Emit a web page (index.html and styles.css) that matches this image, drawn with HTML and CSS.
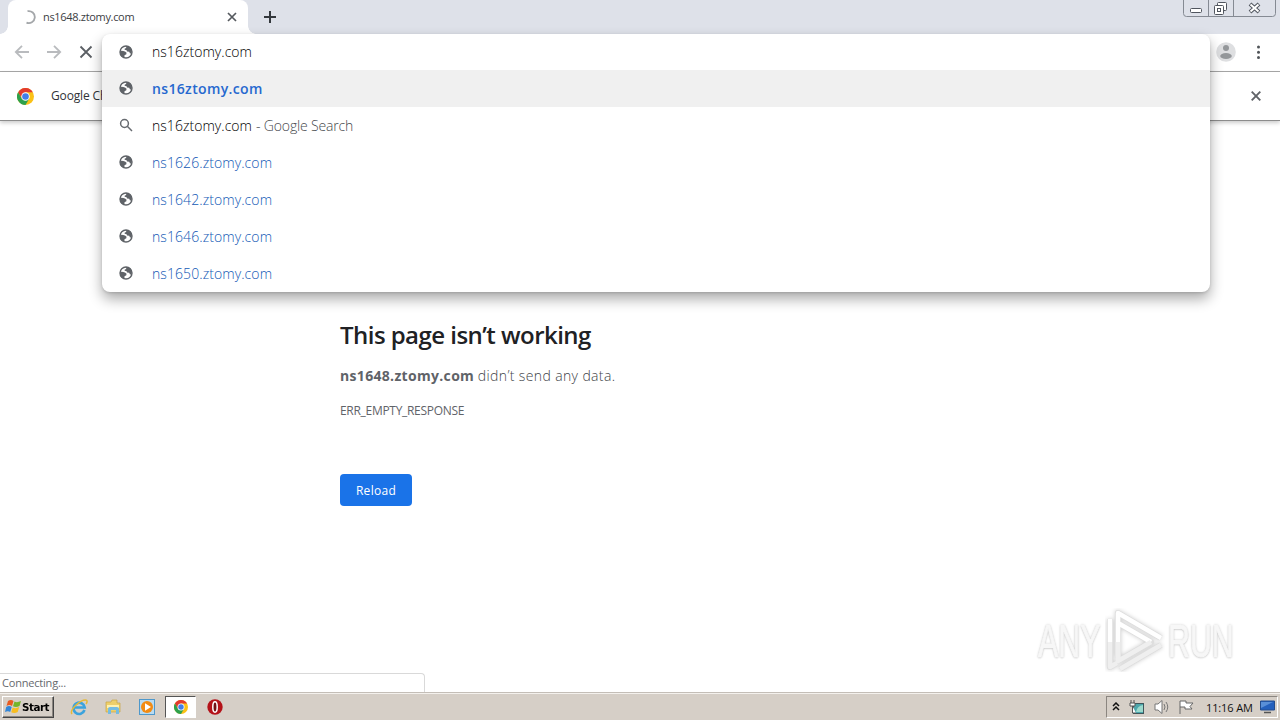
FILE: index.html
```html
<!DOCTYPE html>
<html lang="en">
<head>
<meta charset="utf-8">
<title>ns1648.ztomy.com</title>
<link rel="stylesheet" href="styles.css">
</head>
<body>
<svg class="defs" width="0" height="0" aria-hidden="true">
  <symbol id="globe" viewBox="0 0 14 14">
    <circle cx="7" cy="7" r="6" fill="#fff" stroke="#5f6368" stroke-width="1.4"/>
    <path d="M1 5.6 4.2 6 6 6.4 7.6 7.8 7.2 9.4 5.6 10 5.4 12.8 3 12 1 9.500ZM6.600 1 11 2 13 5.500 12.600 8.500 11 8.400 10.200 6.800 8 6.600 7.600 5.200 5.600 4.800 5.800 3.400 7.400 3Z" fill="#5f6368"/>
  </symbol>
  <symbol id="chrome" viewBox="0 0 18 18">
    <circle cx="9" cy="9" r="9" fill="#fbc116"/>
    <path d="M1.200 4.500A9 9 0 0 1 16.800 4.500H9L5.100 11.250Z" fill="#e33b2e"/>
    <path d="M1.200 4.500A9 9 0 0 0 9 18L12.900 11.250H5.100Z" fill="#2da14c"/>
    <circle cx="9" cy="9" r="4.500" fill="#fff"/>
    <circle cx="9" cy="9" r="3.500" fill="#427ee8"/>
  </symbol>
</svg>
<div class="screen">
  <header class="tabstrip">
    <div class="tab">
      <svg class="spinner" width="14" height="14" viewBox="0 0 14 14"><path d="M5.500 1.200A6 6 0 1 1 4.500 12.600" fill="none" stroke="#a4a7aa" stroke-width="1.800"/></svg>
      <span class="tab-title">ns1648.ztomy.com</span>
      <svg class="tab-close" width="10" height="10" viewBox="0 0 10 10"><path d="M1 1 9 9M9 1 1 9" stroke="#55595e" stroke-width="1.700"/></svg>
    </div>
    <svg class="new-tab" width="12" height="12" viewBox="0 0 12 12"><path d="M6 0V12M0 6H12" stroke="#34383d" stroke-width="2"/></svg>
    <svg class="window-controls" width="94" height="17" viewBox="0 0 94 17">
      <path d="M.5 0V13.500Q.5 16.500 3.500 16.500H89.500Q92.500 16.500 92.500 13.500V0M25.500 0V16M50.500 0V16" fill="none" stroke="#858a93"/>
      <rect x="7.500" y="8.500" width="11" height="4" rx="1" fill="#fff" stroke="#50555e"/>
      <g fill="#fff" stroke="#50555e"><rect x="34.500" y="2.500" width="9" height="8" rx="1"/><rect x="31.500" y="5.500" width="9" height="9" rx="1"/><rect x="34.500" y="8.500" width="3" height="3"/></g>
      <path d="M67 4 76 12M76 4 67 12" stroke="#50555e" stroke-width="4"/><path d="M67.500 4.400 75.500 11.600M75.500 4.400 67.500 11.600" stroke="#fff" stroke-width="2"/>
    </svg>
  </header>
  <nav class="toolbar">
    <svg width="86" height="16" viewBox="0 0 86 16" fill="none" stroke-width="1.800">
      <path d="M15 8H2M8 1.800 1.800 8 8 14.200M33 8H46M40 1.800 46.200 8 40 14.200" stroke="#b9bbbe"/>
      <path d="M66.500 2.500 77.500 13.500M77.500 2.500 66.500 13.500" stroke="#5b5f64"/>
    </svg>
    <div class="toolbar-right">
      <svg width="20" height="20" viewBox="0 0 20 20"><circle cx="10" cy="10" r="9.800" fill="#dedfe1"/><circle cx="10" cy="6" r="3" fill="#94979a"/><ellipse cx="10" cy="14" rx="5.800" ry="3" fill="#94979a"/></svg>
      <svg width="4" height="14" viewBox="0 0 4 14" fill="#505458"><circle cx="2.500" cy="2" r="1.500"/><circle cx="2.500" cy="7.200" r="1.500"/><circle cx="2.500" cy="12.400" r="1.500"/></svg>
    </div>
  </nav>
  <div class="infobar">
    <svg width="17" height="17"><use href="#chrome"/></svg>
    <span class="infobar-text">Google Chrome</span>
    <svg class="infobar-close" width="10" height="10" viewBox="0 0 10 10"><path d="M.7.7 9.300 9.300M9.300.7.7 9.300" stroke="#606368" stroke-width="1.900"/></svg>
  </div>
  <main class="page">
    <section class="error">
      <h1>This page isn’t working</h1>
      <p class="message"><strong>ns1648.ztomy.com</strong> <span>didn’t send any data.</span></p>
      <p class="code">ERR_EMPTY_RESPONSE</p>
      <button class="reload">Reload</button>
    </section>
    <div class="status">Connecting...</div>
    <div class="watermark">
      <span class="mark-any">ANY</span>
      <svg width="60" height="64" viewBox="0 0 60 64" fill="none" stroke-linejoin="round">
        <g class="mark-edge" stroke="#dedede" stroke-width="6"><path d="M13 49V5L56 30M13 15 46 34 13 53M5 11V59L12 55M15 61 56 37"/></g>
        <g stroke="#fff" stroke-width="4.500"><path d="M13 49V5L56 30M13 15 46 34M5 34V11"/></g>
        <g stroke="#efefef" stroke-width="4.500"><path d="M46 34 13 53V34M5 34V59L12 55M15 61 56 37"/></g>
      </svg>
      <span class="mark-run">RUN</span>
    </div>
  </main>
  <footer class="taskbar">
    <div class="start">
      <svg width="17" height="16" viewBox="0 0 17 16"><path d="M3 2Q6 0 8.500 2L7 7Q4.500 5 1.500 7Z" fill="#e95b21"/><path d="M9.500 2.500Q12 4 16 2L14.500 7Q11 9 8 7.300Z" fill="#75b52b"/><path d="M1.200 8Q4 6 6.700 8L5.200 13Q3 11.500 0 13Z" fill="#3286d8"/><path d="M7.700 8.500Q10.500 10 14.200 8L12.700 13Q9.500 15 6.200 13.300Z" fill="#f8bd20"/></svg>
      <span>Start</span>
    </div>
    <div class="pins">
      <svg width="18" height="18" viewBox="0 0 18 18" fill="none"><path d="M14.500 12A5.600 5.600 0 1 1 14.700 9.500H5" stroke="#3ba3dd" stroke-width="2.600"/><path d="M2 16C-1 12 10 2 15.500 2 18 2 17 5 16 6" stroke="#e6b936" stroke-width="1.500"/></svg>
      <svg width="18" height="18" viewBox="0 0 18 18"><path d="M2 4H7L8 2H13V5H16V14H2Z" fill="#edcf6b" stroke="#c7a446" stroke-width=".7"/><path d="M3 7H15V10H3Z" fill="#fff1af"/><path d="M4 16V11Q4 9 6 9H13Q15 9 15 11V16H12V12H7V16Z" fill="#75bce2"/></svg>
      <svg width="18" height="18" viewBox="0 0 18 18"><rect x="1.500" y="1.500" width="15" height="15" fill="#b9dbf1" stroke="#4e98cb"/><circle cx="9" cy="9" r="6" fill="#f28b13"/><path d="M7 5.300 13 9 7 12.700Z" fill="#fff"/></svg>
      <span class="active-app"><svg width="14" height="14"><use href="#chrome"/></svg></span>
      <svg width="18" height="18" viewBox="0 0 18 18"><circle cx="9" cy="9" r="7.700" fill="#b41219"/><ellipse cx="9" cy="9" rx="2.200" ry="5.200" fill="#721014" stroke="#fff" stroke-width="1.500"/></svg>
    </div>
    <div class="tray">
      <svg width="8" height="10" viewBox="0 0 8 10" fill="none" stroke="#111" stroke-width="1.500"><path d="M1 4 4 1 7 4M1 8 4 5 7 8"/></svg>
      <svg width="18" height="16" viewBox="0 0 18 16"><rect x="5.500" y="4.500" width="10" height="10" fill="#4ca6ab" stroke="#3f565b"/><path d="M8 13Q9 7 15 6V13Z" fill="#9bd9cc"/><path d="M3 1V4M6 1V4M2 4H7V7H2ZM4.500 7V14H8" fill="#fff" stroke="#555"/></svg>
      <svg width="18" height="16" viewBox="0 0 18 16" fill="none" stroke="#777"><path d="M2 5H5L9 1.500V14.500L5 11H2Z" fill="#fff"/><path d="M11 5Q13 8 11 11M13 3Q16.500 8 13 13"/></svg>
      <svg width="18" height="16" viewBox="0 0 18 16"><path d="M2 15V2H8V4H15L12 7.500 14 10H7V8H2" fill="#fff" stroke="#666"/></svg>
      <span class="clock">11:16 AM</span>
      <svg width="16" height="14" viewBox="0 0 16 14"><path d="M.5 1H14.500V10H.5Z" fill="#2460bd" stroke="#244c8c"/><path d="M1 2H13L1 8Z" fill="#598fd8"/><path d="M4 12.500H11" stroke="#555" stroke-width="1.500"/></svg>
    </div>
  </footer>
  <div class="omnibox">
    <div class="row input-row"><svg class="icon"><use href="#globe"/></svg><span class="typed">ns16ztomy.com</span></div>
    <div class="row selected"><svg class="icon"><use href="#globe"/></svg><span class="match">ns16ztomy.com</span></div>
    <div class="row"><svg class="icon" viewBox="0 0 14 14" fill="none" stroke="#676b70" stroke-width="1.500"><circle cx="5.500" cy="5.500" r="3.900"/><path d="M8.300 8.300 13 13"/></svg><span class="typed">ns16ztomy.com</span><span class="hint">- Google Search</span></div>
    <div class="row"><svg class="icon"><use href="#globe"/></svg><span class="url">ns1626.ztomy.com</span></div>
    <div class="row"><svg class="icon"><use href="#globe"/></svg><span class="url">ns1642.ztomy.com</span></div>
    <div class="row"><svg class="icon"><use href="#globe"/></svg><span class="url">ns1646.ztomy.com</span></div>
    <div class="row"><svg class="icon"><use href="#globe"/></svg><span class="url">ns1650.ztomy.com</span></div>
  </div>
</div>
</body>
</html>
```
FILE: styles.css
```css
* { box-sizing: border-box; }
body { margin: 0; overflow: hidden; font-family: "Open Sans", "Noto Sans", sans-serif; }
svg { display: block; flex: none; }
.defs { position: absolute; }
.screen { position: relative; width: 1280px; height: 720px; display: flex; flex-direction: column; background: #fff; white-space: nowrap; }
.tabstrip { height: 34px; display: flex; align-items: flex-start; background: #dee1e9; padding-left: 8px; }
.tab { position: relative; width: 240px; height: 34px; display: flex; align-items: center; padding: 0 11px 0 14px; background: #fff; border-radius: 8px 8px 0 0; }
.tab::before, .tab::after { content: ""; position: absolute; bottom: 0; width: 8px; height: 8px; }
.tab::before { left: -8px; background: radial-gradient(circle at 0 0, transparent 7.5px, #fff 8px); }
.tab::after { right: -8px; background: radial-gradient(circle at 100% 0, transparent 7.5px, #fff 8px); }
.tab-title { margin: -2px 0 0 7px; font-size: 11px; letter-spacing: -.32px; color: #3c4043; }
.tab-close { margin-left: auto; }
.new-tab { margin: 11px 0 0 16px; }
.window-controls { margin-left: auto; margin-right: 3px; }
.toolbar { height: 38px; display: flex; align-items: center; padding: 0 20px 2px 14px; border-bottom: 1px solid #a8a8a8; }
.toolbar-right { display: flex; align-items: center; gap: 20px; margin-left: auto; }
.infobar { position: relative; z-index: 1; height: 49px; display: flex; align-items: center; padding: 0 19px 0 17px; border-bottom: 1px solid #8c8c8c; box-shadow: 0 2px 4px #0003; }
.infobar-text { margin: -2px 0 0 17px; font-size: 12px; letter-spacing: -.15px; color: #303338; }
.infobar-close { margin-left: auto; }
.page { position: relative; flex: 1; }
.error { padding: 197px 0 0 340px; }
h1 { margin: 0; font-size: 24px; font-weight: 600; line-height: 33px; letter-spacing: -.54px; color: #202124; }
.message { margin: 13px 0 0; font-size: 14px; line-height: 24px; color: #5f6368; }
.message strong { letter-spacing: .32px; }
.message span { font-weight: 350; letter-spacing: .37px; color: #414448; }
.code { margin: 14px 0 0; font-size: 12px; line-height: 18px; letter-spacing: -.3px; color: #5f6368; }
.reload { display: block; width: 72px; height: 32px; margin-top: 54px; padding: 0; border: 0; border-radius: 4px; background: #1a73e8; color: #fff; font: 12px "Open Sans", sans-serif; letter-spacing: .3px; }
.status { position: absolute; left: 0; bottom: 0; width: 425px; height: 19px; padding-left: 2px; border: 1px solid #d9d9d9; border-width: 1px 1px 0 0; border-radius: 0 4px 0 0; font-size: 11px; line-height: 18px; letter-spacing: -.2px; color: #66696d; }
.watermark { position: absolute; left: 1038px; top: 486px; width: 194px; display: flex; align-items: center; justify-content: space-between; font: 46px/64px "Liberation Sans", sans-serif; color: #f7f7f7; -webkit-text-stroke: 1px #f7f7f7; text-shadow: 0 0 3px #bbb, 0 1px 2px #ccc; }
.mark-any, .mark-run { width: 64px; transform: scaleX(.66); transform-origin: left; padding-top: 2px; }
.mark-edge { filter: drop-shadow(0 0 2px #ccc); }
.taskbar { position: relative; height: 28px; display: flex; align-items: center; padding: 1px 2px 0; background: #d6cfc7; border-top: 1px solid #c4beb7; box-shadow: inset 0 1px #f4f1ed; }
.start { width: 52px; height: 22px; display: flex; align-items: center; padding-left: 2px; border: 1px solid; border-color: #fff #444 #444 #fff; box-shadow: inset -1px -1px #8b8680; font: bold 11px "DejaVu Sans", sans-serif; letter-spacing: -.5px; }
.start span { transform: scaleX(.94); transform-origin: left; }
.pins { display: flex; align-items: center; margin-left: 16px; gap: 16px; }
.active-app { width: 31px; height: 22px; display: grid; place-items: center; margin: 0 -6px 0 -7px; border: 1px solid; border-color: #555 #fff #fff #555; background: #fff; }
.tray { width: 172px; height: 22px; display: flex; align-items: center; margin-left: auto; padding: 0 1px 0 5px; gap: 7px; border: 1px solid; border-color: #8b8680 #fff #fff #8b8680; }
.tray svg:nth-child(2) { margin-left: 1px; }
.clock { margin-left: 3px; font-size: 11px; letter-spacing: -.12px; color: #111; }
.omnibox { position: absolute; z-index: 2; left: 102px; top: 34px; width: 1108px; height: 258px; overflow: hidden; background: #fff; border-radius: 8px; box-shadow: 0 7px 14px #0005, 0 1px 3px #0002; font-size: 14px; }
.row { height: 37px; display: flex; align-items: center; padding-left: 17px; color: #202124; }
.input-row { height: 36px; }
.input-row .typed { margin-top: -1px; }
.selected { background: #f0f0f0; }
.icon { width: 14px; height: 14px; margin: -1px 19px 0 0; }
.typed { font-weight: 350; letter-spacing: .04px; color: #000; }
.match { font-weight: 600; letter-spacing: .35px; color: #2668cf; }
.hint { margin-left: 4px; font-weight: 350; letter-spacing: -.16px; color: #45484c; }
.url { font-weight: 350; letter-spacing: .08px; color: #1259b5; }
```
